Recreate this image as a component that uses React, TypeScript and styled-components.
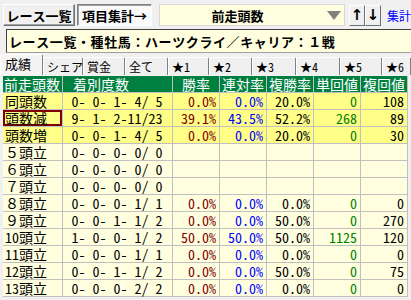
import React from "react";
import styled, { createGlobalStyle, css } from "styled-components";

const Global = createGlobalStyle`
  html, body { margin: 0; padding: 0; background: #f0f0f0; }
  body { width: 411px; height: 300px; overflow: hidden; }
  * { box-sizing: border-box; }
`;

const JP = `"Noto Sans Mono CJK JP", "Noto Sans CJK JP", monospace`;

const Page = styled.div`
  width: 411px;
  height: 300px;
  background: #f0f0f0;
  font-family: ${JP};
  color: #000;
  overflow: hidden;
  display: flex;
  flex-direction: column;
`;

const TopBar = styled.div`
  display: flex;
  align-items: center;
  height: 28px;
  padding: 3px 0 1px 3px;
`;

const Btn = styled.div<{ $pressed?: boolean }>`
  height: 22px;
  width: ${(p) => (p.$pressed ? 75 : 72)}px;
  margin-left: ${(p) => (p.$pressed ? 2 : 0)}px;
  display: flex;
  align-items: center;
  justify-content: center;
  font-size: 13px;
  font-weight: 700;
  white-space: nowrap;
  background: ${(p) => (p.$pressed ? "#fafafa" : "#f0f0f0")};
  ${(p) =>
    p.$pressed
      ? css`
          border-top: 1px solid #808080;
          border-left: 1px solid #808080;
          border-right: 1px solid #ffffff;
          border-bottom: 1px solid #ffffff;
          box-shadow: inset 1px 1px 0 #a0a0a0;
        `
      : css`
          border-top: 1px solid #ffffff;
          border-left: 1px solid #ffffff;
          border-right: 1px solid #707070;
          border-bottom: 1px solid #707070;
          box-shadow: inset -1px -1px 0 #a0a0a0;
        `}
`;

const Select = styled.div`
  margin-left: 7px;
  width: 186px;
  height: 22px;
  background: #ffffe0;
  border: 1px solid #d8d8d8;
  display: flex;
  align-items: center;
`;

const SelectText = styled.span`
  flex: 1;
  text-align: center;
  font-size: 13px;
  font-weight: 700;
  padding-right: 12px;
  white-space: nowrap;
`;

const Caret = styled.span`
  width: 0;
  height: 0;
  margin-right: 3px;
  border-left: 7px solid transparent;
  border-right: 7px solid transparent;
  border-top: 9px solid #808080;
`;

const ArrowBtn = styled.div<{ $first?: boolean }>`
  margin-left: ${(p) => (p.$first ? 4 : 0)}px;
  width: 16px;
  height: 21px;
  display: flex;
  align-items: center;
  justify-content: center;
  font-family: "DejaVu Sans", sans-serif;
  font-size: 15px;
  font-weight: 700;
  background: #f0f0f0;
  border-top: 1px solid #ffffff;
  border-left: 1px solid #ffffff;
  border-right: 1px solid #707070;
  border-bottom: 1px solid #707070;
`;

const LinkText = styled.span`
  margin-left: 6px;
  color: #0000ff;
  font-size: 12px;
  white-space: nowrap;
  font-family: "Noto Sans CJK JP", sans-serif;
`;

const TitleBox = styled.div`
  margin: 1px 0 0 6px;
  height: 24px;
  background: #ffffe0;
  border-top: 1px solid #404040;
  border-left: 1px solid #404040;
  border-bottom: 1px solid #a0a0a0;
  display: flex;
  align-items: center;
  padding-left: 2px;
  font-size: 13px;
  font-weight: 700;
  letter-spacing: 0.6px;
  white-space: nowrap;
`;

const TabStrip = styled.div`
  display: flex;
  align-items: flex-end;
  height: 22px;
  margin-top: 1px;
  padding-bottom: 1px;
`;

const Tab = styled.div<{ $w: number; $active?: boolean }>`
  width: ${(p) => p.$w}px;
  height: ${(p) => (p.$active ? 21 : 18)}px;
  flex: none;
  display: flex;
  align-items: center;
  padding-left: ${(p) => (p.$active ? 4 : 3)}px;
  padding-bottom: ${(p) => (p.$active ? 3 : 0)}px;
  font-size: ${(p) => (p.$active ? 13 : 12)}px;
  background: ${(p) => (p.$active ? "#f4f4f4" : "#f0f0f0")};
  border-top: 1px solid #ffffff;
  border-left: 1px solid #ffffff;
  border-right: 1px solid #808080;
  border-radius: 2px 2px 0 0;
  white-space: nowrap;
`;

const Grid = styled.div`
  margin-left: 3px;
  display: grid;
  grid-template-columns: 60px 110px 47px 47px 47px 47px 47px;
  width: 405px;
  border-bottom: 1px solid #c0c0c0;
`;

const HeadCell = styled.div<{ $align: string; $pad: number }>`
  height: 16px;
  background: #008040;
  color: #ffffff;
  font-size: 14px;
  line-height: 16px;
  text-align: ${(p) => p.$align};
  padding-left: ${(p) => p.$pad}px;
  border-right: 1px solid #c0c0c0;
  white-space: pre;
`;

const Cell = styled.div<{ $bg: string; $color?: string; $align: string; $sel?: boolean }>`
  height: 17px;
  background: ${(p) => p.$bg};
  color: ${(p) => p.$color || "#000"};
  font-size: 14px;
  line-height: 16px;
  text-align: ${(p) => p.$align};
  padding: 0 3px 0 2px;
  border-right: 1px solid #c0c0c0;
  border-top: 1px solid #c0c0c0;
  white-space: pre;
  ${(p) =>
    p.$sel &&
    css`
      box-shadow: inset 0 0 0 2px #800000;
    `}
`;

type Row = {
  label: string;
  rec: string;
  win: string;
  ren: string;
  fuku: string;
  tan: string;
  fkv: string;
  hi?: boolean;
  sel?: boolean;
};

const rows: Row[] = [
  { label: "同頭数", rec: "0- 0- 1- 4/ 5", win: "0.0%", ren: "0.0%", fuku: "20.0%", tan: "0", fkv: "108", hi: true },
  { label: "頭数減", rec: "9- 1- 2-11/23", win: "39.1%", ren: "43.5%", fuku: "52.2%", tan: "268", fkv: "89", hi: true, sel: true },
  { label: "頭数増", rec: "0- 0- 1- 4/ 5", win: "0.0%", ren: "0.0%", fuku: "20.0%", tan: "0", fkv: "30", hi: true },
  { label: "５頭立", rec: "0- 0- 0- 0/ 0", win: "", ren: "", fuku: "", tan: "", fkv: "" },
  { label: "６頭立", rec: "0- 0- 0- 0/ 0", win: "", ren: "", fuku: "", tan: "", fkv: "" },
  { label: "７頭立", rec: "0- 0- 0- 0/ 0", win: "", ren: "", fuku: "", tan: "", fkv: "" },
  { label: "８頭立", rec: "0- 0- 0- 1/ 1", win: "0.0%", ren: "0.0%", fuku: "0.0%", tan: "0", fkv: "0" },
  { label: "９頭立", rec: "0- 0- 1- 1/ 2", win: "0.0%", ren: "0.0%", fuku: "50.0%", tan: "0", fkv: "270" },
  { label: "10頭立", rec: "1- 0- 0- 1/ 2", win: "50.0%", ren: "50.0%", fuku: "50.0%", tan: "1125", fkv: "120" },
  { label: "11頭立", rec: "0- 0- 0- 1/ 1", win: "0.0%", ren: "0.0%", fuku: "0.0%", tan: "0", fkv: "0" },
  { label: "12頭立", rec: "0- 0- 1- 1/ 2", win: "0.0%", ren: "0.0%", fuku: "50.0%", tan: "0", fkv: "75" },
  { label: "13頭立", rec: "0- 0- 0- 2/ 2", win: "0.0%", ren: "0.0%", fuku: "0.0%", tan: "0", fkv: "0" },
];

const tabs: { t: string; w: number }[] = [
  { t: "成績", w: 43 },
  { t: "シェア", w: 40 },
  { t: "賞金", w: 42 },
  { t: "全て", w: 43 },
  { t: "★1", w: 41 },
  { t: "★2", w: 43 },
  { t: "★3", w: 44 },
  { t: "★4", w: 44 },
  { t: "★5", w: 42 },
  { t: "★6", w: 29 },
];

const headers: { t: string; a: string; p: number }[] = [
  { t: "前走頭数", a: "left", p: 1 },
  { t: "着別度数", a: "left", p: 10 },
  { t: "勝率", a: "center", p: 0 },
  { t: "連対率", a: "center", p: 0 },
  { t: "複勝率", a: "center", p: 0 },
  { t: "単回値", a: "center", p: 0 },
  { t: "複回値", a: "center", p: 0 },
];

export default function App() {
  return (
    <Page>
      <Global />
      <TopBar>
        <Btn>レース一覧</Btn>
        <Btn $pressed>項目集計→</Btn>
        <Select>
          <SelectText>前走頭数</SelectText>
          <Caret />
        </Select>
        <ArrowBtn $first>↑</ArrowBtn>
        <ArrowBtn>↓</ArrowBtn>
        <LinkText>集計</LinkText>
      </TopBar>
      <TitleBox>レース一覧・種牡馬：ハーツクライ／キャリア：１戦</TitleBox>
      <TabStrip>
        {tabs.map((t, i) => (
          <Tab key={t.t} $w={t.w} $active={i === 0}>
            {t.t}
          </Tab>
        ))}
      </TabStrip>
      <Grid>
        {headers.map((h) => (
          <HeadCell key={h.t} $align={h.a} $pad={h.p}>
            {h.t}
          </HeadCell>
        ))}
        {rows.map((r) => {
          const bg = r.hi ? "#ffff88" : "#ffffe0";
          return (
            <React.Fragment key={r.label}>
              <Cell $bg={bg} $align="left" $sel={r.sel}>{r.label}</Cell>
              <Cell $bg={bg} $align="center">{r.rec}</Cell>
              <Cell $bg={bg} $align="right" $color="#800000">{r.win}</Cell>
              <Cell $bg={bg} $align="right" $color="#0000ff">{r.ren}</Cell>
              <Cell $bg={bg} $align="right">{r.fuku}</Cell>
              <Cell $bg={bg} $align="right" $color="#008000">{r.tan}</Cell>
              <Cell $bg={bg} $align="right">{r.fkv}</Cell>
            </React.Fragment>
          );
        })}
      </Grid>
    </Page>
  );
}
